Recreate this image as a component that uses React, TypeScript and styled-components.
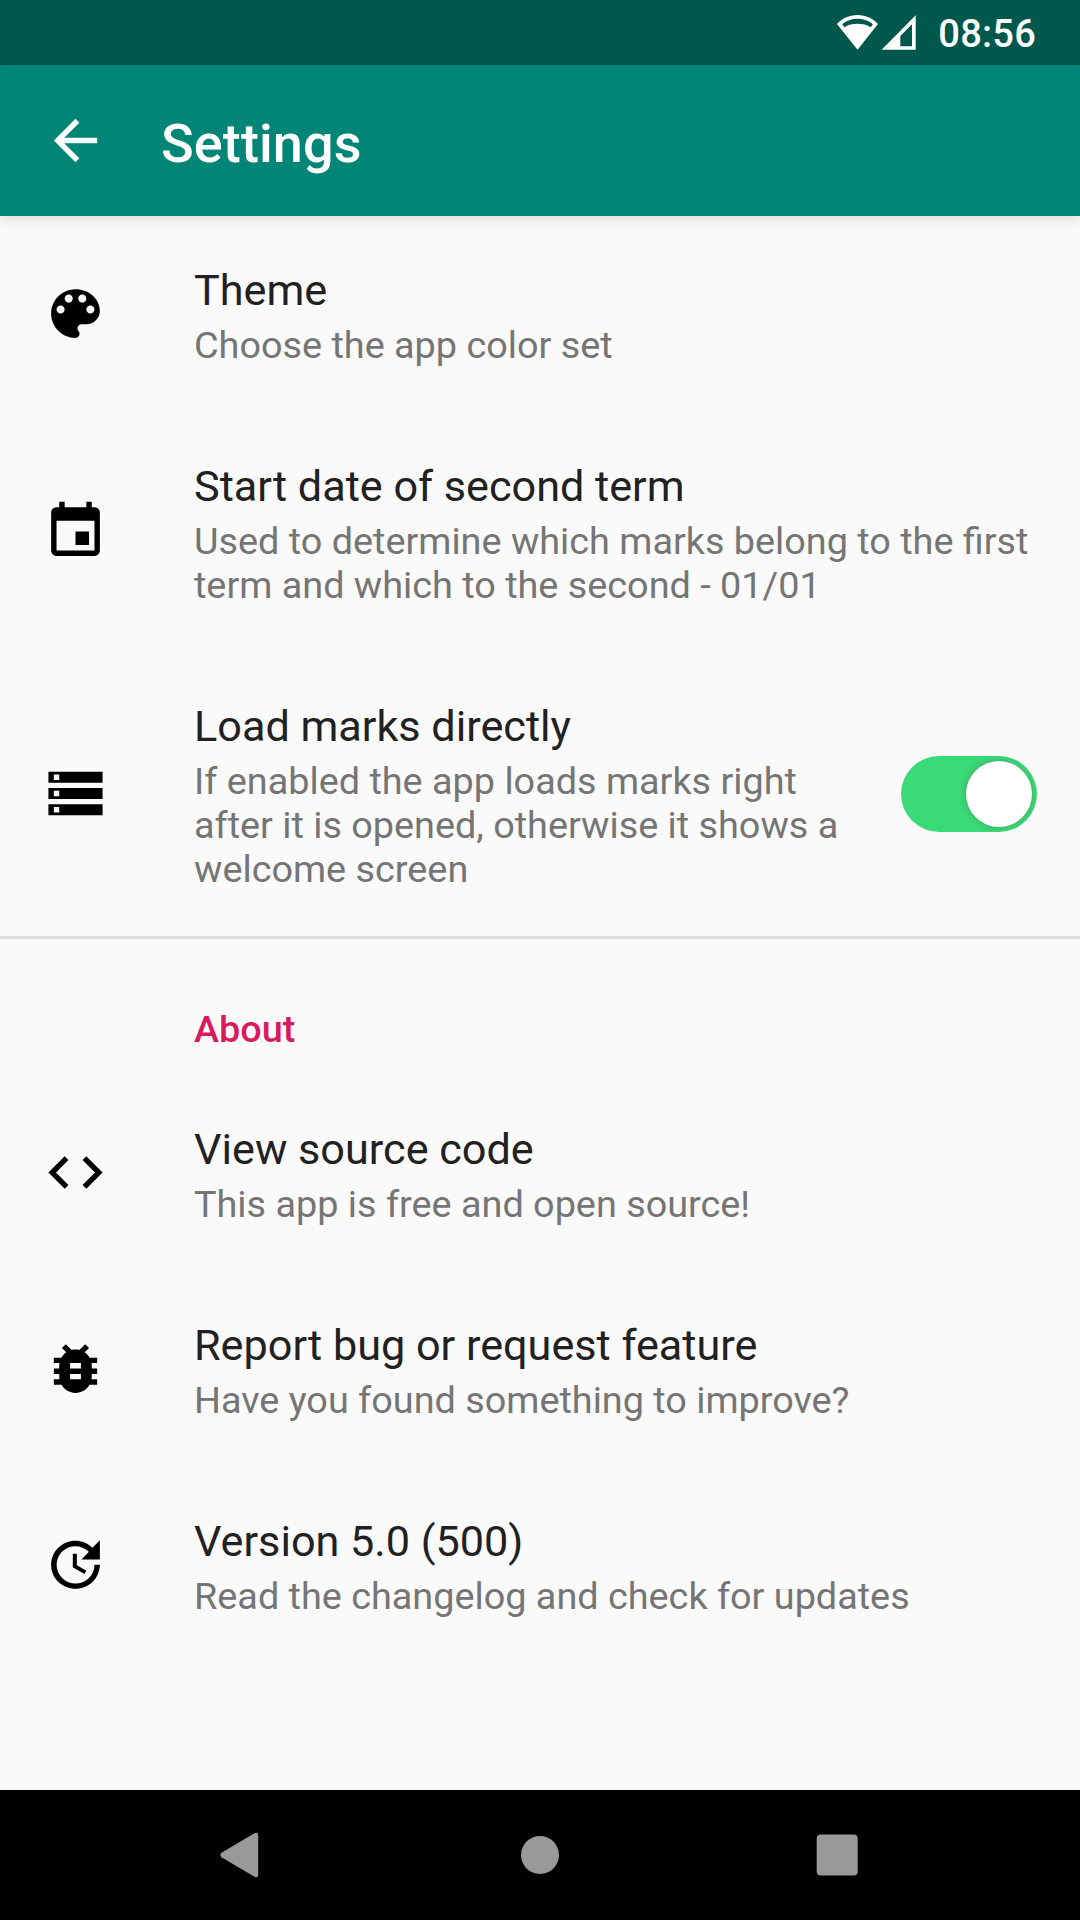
import React, { useState } from 'react';
import styled, { createGlobalStyle } from 'styled-components';

const GlobalStyle = createGlobalStyle`
  body { margin: 0; background: #fafafa; }
  * { box-sizing: border-box; }
`;

const Screen = styled.div`
  width: 1080px;
  height: 1920px;
  display: flex;
  flex-direction: column;
  overflow: hidden;
  background: #fafafa;
  color: #212121;
  font-family: Roboto, 'Noto Sans', sans-serif;
  font-size: 37.8px;
`;

const StatusBar = styled.div`
  flex: none;
  height: 65px;
  padding: 0 44px 0 0;
  display: flex;
  justify-content: flex-end;
  align-items: center;
  background: #00574b;
  color: #fff;
`;

const StatusIcons = styled.svg`
  display: block;
  margin-right: 22px;
`;

const Clock = styled.span`
  font-size: 38px;
  font-weight: 500;
  line-height: 44px;
  letter-spacing: 0.25px;
  padding-top: 3px;
`;

const AppBar = styled.header`
  flex: none;
  height: 151px;
  padding: 0 43px;
  display: flex;
  align-items: center;
  background: #008577;
  color: #fff;
  box-shadow: 0 3px 12px rgba(0, 0, 0, 0.13);
`;

const BackButton = styled.button`
  width: 65px;
  height: 65px;
  padding: 0;
  border: 0;
  background: none;
  color: inherit;
`;

const Icon = styled.svg`
  display: block;
  flex: none;
  width: 65px;
  height: 65px;
  fill: currentColor;
`;

const ScreenTitle = styled.h1`
  margin: 0 0 0 53px;
  padding-top: 6px;
  font-size: 54px;
  font-weight: 500;
  line-height: 64px;
  letter-spacing: 0.1px;
`;

const List = styled.main`
  flex: 1;
`;

const Row = styled.section`
  display: flex;
  align-items: center;
  padding: 0 43px;
  color: #000;

  > ${Icon} {
    margin-bottom: 2px;
  }
`;

const RowText = styled.div`
  flex: 1;
  min-width: 0;
  margin-left: 86px;
  padding: 49px 0 45px;
`;

const RowTitle = styled.div`
  color: #212121;
  font-size: 43.2px;
  line-height: 51px;
  white-space: nowrap;
`;

const RowSummary = styled.div`
  margin-top: 7px;
  color: #757575;
  line-height: 44px;
  white-space: pre;
`;

const Divider = styled.div`
  height: 3px;
  background: #dcdcdc;
`;

const Category = styled.h2`
  height: 136px;
  margin: 0;
  padding: 68px 0 0 194px;
  color: #d81b60;
  font-size: 37.8px;
  font-weight: 500;
  line-height: 44px;
`;

const Track = styled.button<{ $on: boolean }>`
  flex: none;
  width: 136px;
  height: 76px;
  padding: 5px;
  border: 0;
  border-radius: 38px;
  display: flex;
  justify-content: ${(p) => (p.$on ? 'flex-end' : 'flex-start')};
  overflow: hidden;
  background: ${(p) => (p.$on ? '#3ada76' : '#cccccc')};
`;

const Knob = styled.span`
  width: 66px;
  height: 66px;
  border-radius: 50%;
  background: #fff;
  box-shadow: 0 0 7px rgba(80, 80, 80, 0.42);
`;

const NavBar = styled.nav`
  flex: none;
  height: 130px;
  padding: 0 187px;
  display: flex;
  align-items: center;
  justify-content: space-between;
  background: #000;
`;

const NavIcon = styled.svg`
  display: block;
  width: 110px;
  height: 130px;
  fill: #999;
`;

const ICONS = {
  back: 'M20 11H7.83l5.59-5.59L12 4l-8 8 8 8 1.41-1.41L7.83 13H20v-2z',
  palette:
    'M12 3c-4.97 0-9 4.03-9 9s4.03 9 9 9c.83 0 1.5-.67 1.5-1.5 0-.39-.15-.74-.39-1.01-.23-.26-.38-.61-.38-.99 0-.83.67-1.5 1.5-1.5H16c2.76 0 5-2.24 5-5 0-4.42-4.03-8-9-8zm-5.5 9c-.83 0-1.5-.67-1.5-1.5S5.67 9 6.5 9 8 9.67 8 10.5 7.33 12 6.5 12zm3-4C8.67 8 8 7.33 8 6.5S8.67 5 9.5 5s1.5.67 1.5 1.5S10.33 8 9.5 8zm5 0c-.83 0-1.5-.67-1.5-1.5S13.67 5 14.5 5s1.5.67 1.5 1.5S15.33 8 14.5 8zm3 4c-.83 0-1.5-.67-1.5-1.5S16.67 9 17.5 9s1.5.67 1.5 1.5-.67 1.5-1.5 1.5z',
  event:
    'M17 12h-5v5h5v-5zM16 1v2H8V1H6v2H5c-1.11 0-1.99.9-1.99 2L3 19c0 1.1.89 2 2 2h14c1.1 0 2-.9 2-2V5c0-1.1-.9-2-2-2h-1V1h-2zm3 18H5V8h14v11z',
  storage:
    'M2 20h20v-4H2v4zm2-3h2v2H4v-2zM2 4v4h20V4H2zm4 3H4V5h2v2zm-4 7h20v-4H2v4zm2-3h2v2H4v-2z',
  code: 'M9.4 16.6L4.8 12l4.6-4.6L8 6l-6 6 6 6 1.4-1.4zm5.2 0l4.6-4.6-4.6-4.6L16 6l6 6-6 6-1.4-1.4z',
  bug: 'M20 8h-2.81c-.45-.78-1.07-1.45-1.82-1.96L17 4.41 15.59 3l-2.17 2.17C12.96 5.06 12.49 5 12 5c-.49 0-.96.06-1.41.17L8.41 3 7 4.41l1.62 1.63C7.88 6.55 7.26 7.22 6.81 8H4v2h2.09c-.05.33-.09.66-.09 1v1H4v2h2v1c0 .34.04.67.09 1H4v2h2.81c1.04 1.79 2.97 3 5.19 3s4.15-1.21 5.19-3H20v-2h-2.09c.05-.33.09-.66.09-1v-1h2v-2h-2v-1c0-.34-.04-.67-.09-1H20V8zm-6 8h-4v-2h4v2zm0-4h-4v-2h4v2z',
  update:
    'M21 10.12h-6.78l2.74-2.82c-2.73-2.7-7.15-2.8-9.88-.1-2.73 2.71-2.73 7.08 0 9.79s7.15 2.71 9.88 0C18.32 15.65 19 14.08 19 12.1h2c0 1.98-.88 4.55-2.64 6.29-3.51 3.48-9.21 3.48-12.72 0-3.5-3.47-3.53-9.11-.02-12.58s9.14-3.47 12.65 0L21 3v7.12zM12.5 8v4.25l3.5 2.08-.72 1.21L11 13V8h1.5z',
};

type IconName = keyof typeof ICONS;

function Glyph({ name }: { name: IconName }) {
  return (
    <Icon viewBox="0 0 24 24" aria-hidden="true">
      <path d={ICONS[name]} />
    </Icon>
  );
}

interface PreferenceProps {
  icon: IconName;
  title: string;
  summary: string;
  children?: React.ReactNode;
}

function Preference({ icon, title, summary, children }: PreferenceProps) {
  return (
    <Row>
      <Glyph name={icon} />
      <RowText>
        <RowTitle>{title}</RowTitle>
        <RowSummary>{summary}</RowSummary>
      </RowText>
      {children}
    </Row>
  );
}

export default function App() {
  const [direct, setDirect] = useState(true);
  return (
    <Screen>
      <GlobalStyle />
      <StatusBar>
        <StatusIcons width="80" height="65" viewBox="836 0 80 65" aria-hidden="true">
          <path
            fill="#fff"
            fillRule="evenodd"
            d="M857.5 15C849 15 842 18.500 837 24L857.500 49.800L878 24C873 18.500 866 15 857.500 15ZM857.500 18.800C863.500 18.800 868.500 20.700 872.800 24.300L870.800 27.300C867 24.800 862.500 23.700 857.500 23.700C852.500 23.700 848 24.800 844.200 27.300L842.200 24.300C846.500 20.700 851.500 18.800 857.500 18.800Z"
          />
          <path
            fill="#fff"
            fillRule="evenodd"
            d="M915.700 15.300V49.700H881.600ZM912 24.300L900.300 36V46.200H912Z"
          />
        </StatusIcons>
        <Clock>08:56</Clock>
      </StatusBar>
      <AppBar>
        <BackButton aria-label="Back">
          <Glyph name="back" />
        </BackButton>
        <ScreenTitle>Settings</ScreenTitle>
      </AppBar>
      <List>
        <Preference icon="palette" title="Theme" summary="Choose the app color set" />
        <Preference
          icon="event"
          title="Start date of second term"
          summary={'Used to determine which marks belong to the first\nterm and which to the second - 01/01'}
        />
        <Preference
          icon="storage"
          title="Load marks directly"
          summary={'If enabled the app loads marks right\nafter it is opened, otherwise it shows a\nwelcome screen'}
        >
          <Track
            $on={direct}
            role="switch"
            aria-checked={direct}
            aria-label="Load marks directly"
            onClick={() => setDirect(!direct)}
          >
            <Knob />
          </Track>
        </Preference>
        <Divider />
        <Category>About</Category>
        <Preference icon="code" title="View source code" summary="This app is free and open source!" />
        <Preference icon="bug" title="Report bug or request feature" summary="Have you found something to improve?" />
        <Preference icon="update" title="Version 5.0 (500)" summary="Read the changelog and check for updates" />
      </List>
      <NavBar>
        <NavIcon viewBox="187 1790 110 130">
          <path d="M221.500 1852.800L254 1833.400Q258.200 1831.300 258.200 1835V1875Q258.200 1878.500 254 1876.400L221.500 1857.200Q219 1855 221.500 1852.800Z" />
        </NavIcon>
        <NavIcon viewBox="485 1790 110 130">
          <circle cx="540" cy="1855" r="19" />
        </NavIcon>
        <NavIcon viewBox="783 1790 110 130">
          <rect x="816.700" y="1834.500" width="41" height="41" rx="4" />
        </NavIcon>
      </NavBar>
    </Screen>
  );
}
